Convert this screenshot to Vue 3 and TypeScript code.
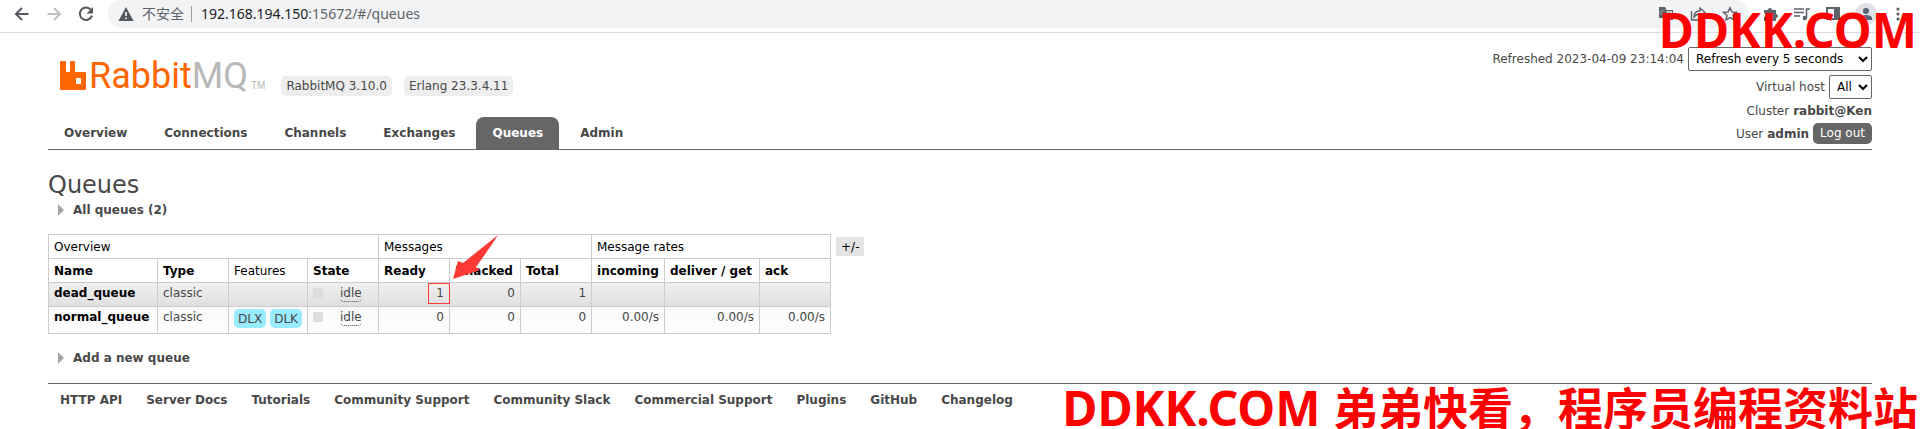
<script setup lang="ts">
import { ref } from 'vue'

interface Queue {
  name: string
  type: string
  features: string[]
  state: string
  ready: number
  unacked: number
  total: number
  rates: string[]
  marked: boolean
}

const tabs: string[] = ['Overview', 'Connections', 'Channels', 'Exchanges', 'Queues', 'Admin']
const current = 'Queues'

const queues: Queue[] = [
  { name: 'dead_queue', type: 'classic', features: [], state: 'idle', ready: 1, unacked: 0, total: 1, rates: ['', '', ''], marked: true },
  { name: 'normal_queue', type: 'classic', features: ['DLX', 'DLK'], state: 'idle', ready: 0, unacked: 0, total: 0, rates: ['0.00/s', '0.00/s', '0.00/s'], marked: false },
]

const links: string[] = ['HTTP API', 'Server Docs', 'Tutorials', 'Community Support', 'Community Slack', 'Commercial Support', 'Plugins', 'GitHub', 'Changelog']

const refresh = ref('Refresh every 5 seconds')
const vhost = ref('All')
</script>

<template>
  <div class="page">
    <div class="toolbar">
      <div class="nav-buttons">
        <button type="button" aria-label="Back">
          <svg width="16" height="16" viewBox="0 0 16 16"><path d="M14.5 8H2.2M8 2L2 8l6 6" fill="none" stroke="#55585c" stroke-width="2" /></svg>
        </button>
        <button type="button" aria-label="Forward">
          <svg width="16" height="16" viewBox="0 0 16 16"><path d="M1.5 8h12.3M8 2l6 6-6 6" fill="none" stroke="#bcbec1" stroke-width="2" /></svg>
        </button>
        <button type="button" aria-label="Reload">
          <svg width="16" height="16" viewBox="0 0 16 16"><path d="M13.2 4.2A6.2 6.2 0 1 0 14 9.6" fill="none" stroke="#55585c" stroke-width="2" /><path d="M15 1v6.5H8.5z" fill="#55585c" /></svg>
        </button>
      </div>
      <div class="address">
        <svg width="16" height="14" viewBox="0 0 16 14"><path d="M8 0l7.6 14H.4z" fill="#55585c" /><path d="M8 5v4M8 10.500v1.500" stroke="#fff" stroke-width="1.6" /></svg>
        <span class="insecure">不安全</span>
        <span class="bar"></span>
        <span class="url"><b>192.168.194.150</b>:15672/#/queues</span>
        <div class="address-icons">
          <svg width="16" height="16" viewBox="0 0 16 16"><path d="M1 1h6l1.5 3H15v10H7l-1-2H1z" fill="#5f6368" /><path d="M8.5 5.200H14V13H9.500z" fill="#f1f3f4" /><path d="M6 5.500A2 2 0 1 0 6 7.500H4.500M9 7h4.500M11 6v1c0 2-1 3-2 4M10 8l3 3" fill="none" stroke="#9a9da1" /></svg>
          <svg width="16" height="16" viewBox="0 0 16 16"><path d="M1.500 5v9h12v-3M4 11c0-4 2-6 6-6V2l5 4.500-5 4V8C7 8 5.500 9 4 11z" fill="none" stroke="#5f6368" stroke-width="1.4" /></svg>
          <svg width="16" height="16" viewBox="0 0 16 16"><path d="M8 1.800l1.900 4.100 4.500.5-3.400 3 1 4.400-4-2.300-4 2.300 1-4.400-3.400-3 4.500-.5z" fill="none" stroke="#5f6368" stroke-width="1.5" /></svg>
        </div>
      </div>
      <div class="tool-icons">
        <svg width="16" height="16" viewBox="0 0 16 16"><path d="M1 4h4a2 2 0 1 1 4 0h4v4a2 2 0 1 1 0 4v3H9.500a2 2 0 0 0-4 0H1v-4a2 2 0 0 0 0-4z" fill="#5f6368" /></svg>
        <svg width="18" height="16" viewBox="0 0 18 16"><path d="M1 3h10M1 6.500h10M1 10h6M13.500 12V3h3.500" fill="none" stroke="#5f6368" stroke-width="1.6" /><circle cx="11.8" cy="12" r="2.2" fill="#5f6368" /></svg>
        <svg width="16" height="16" viewBox="0 0 16 16"><path d="M1 1h14v13H1zM3 3v9h6V3z" fill="#5f6368" fill-rule="evenodd" /></svg>
        <svg width="22" height="22" viewBox="0 0 22 22"><circle cx="11" cy="11" r="11" fill="#dfe1e6" /><circle cx="11" cy="8" r="3" fill="#5b6678" /><path d="M5 17v-2c0-2 3-3 6-3s6 1 6 3v2z" fill="#5b6678" /></svg>
        <svg class="dots" width="4" height="16" viewBox="0 0 4 16"><circle cx="2" cy="3" r="1.6" fill="#5f6368" /><circle cx="2" cy="8" r="1.6" fill="#5f6368" /><circle cx="2" cy="13" r="1.6" fill="#5f6368" /></svg>
      </div>
    </div>

    <div class="content">
      <header>
        <div class="brand-side">
          <div class="brand">
            <svg width="26" height="29" viewBox="0 0 26 29"><path d="M1 0h4q1 0 1 1v9q0 1 1 1h2q1 0 1-1V1q0-1 1-1h3q1 0 1 1v9q0 1 1 1h9q1 0 1 1v16q0 1-1 1H1q-1 0-1-1V1q0-1 1-1zM17 17q-1 0-1 1v4q0 1 1 1h3q1 0 1-1v-4q0-1-1-1z" fill="#f60" fill-rule="evenodd" /></svg>
            <span class="wordmark">Rabbit<span>MQ</span></span>
            <span class="tm">TM</span>
            <span class="badge">RabbitMQ 3.10.0</span>
            <span class="badge">Erlang 23.3.4.11</span>
          </div>
          <nav class="tabs">
            <a v-for="t in tabs" :key="t" href="#" :class="{ selected: t === current }">{{ t }}</a>
          </nav>
        </div>
        <div class="login">
          <div class="row">
            <label for="refresh">Refreshed 2023-04-09 23:14:04</label>
            <select id="refresh" v-model="refresh" class="refresh"><option>Refresh every 5 seconds</option></select>
          </div>
          <div class="row">
            <label for="vhost">Virtual host</label>
            <select id="vhost" v-model="vhost"><option>All</option></select>
          </div>
          <div class="row">Cluster <b>rabbit@Ken</b></div>
          <div class="row">User <b>admin</b> <button type="button" class="logout">Log out</button></div>
        </div>
      </header>

      <main>
        <h1>Queues</h1>
        <h2>All queues (2)</h2>
        <div class="listing">
          <table>
            <colgroup>
              <col class="c-name"><col class="c-type"><col class="c-feat"><col class="c-std"><col class="c-std"><col class="c-std"><col class="c-std"><col class="c-in"><col class="c-get"><col class="c-std">
            </colgroup>
            <thead>
              <tr class="groups">
                <th colspan="4">Overview</th>
                <th colspan="3">Messages</th>
                <th colspan="3">Message rates</th>
              </tr>
              <tr>
                <th>Name</th><th>Type</th><th class="plain">Features</th><th>State</th>
                <th>Ready</th><th>Unacked</th><th>Total</th>
                <th>incoming</th><th>deliver / get</th><th>ack</th>
              </tr>
            </thead>
            <tbody>
              <tr v-for="q in queues" :key="q.name">
                <td><a href="#">{{ q.name }}</a></td>
                <td>{{ q.type }}</td>
                <td><span v-if="q.features.length" class="chips"><span v-for="f in q.features" :key="f">{{ f }}</span></span></td>
                <td><span class="state"><i></i><abbr>{{ q.state }}</abbr></span></td>
                <td class="num ready">
                  {{ q.ready }}
                  <template v-if="q.marked">
                    <span class="mark"></span>
                    <svg class="arrow" width="48" height="46" viewBox="0 0 48 46"><path d="M0 45L5 27l5 2L45 1Q34 18 23 33l4 3z" fill="#ff3a36" /></svg>
                  </template>
                </td>
                <td class="num">{{ q.unacked }}</td>
                <td class="num">{{ q.total }}</td>
                <td v-for="(r, i) in q.rates" :key="i" class="num">{{ r }}</td>
              </tr>
            </tbody>
          </table>
          <button type="button" class="columns">+/-</button>
        </div>
        <h2>Add a new queue</h2>
      </main>

      <footer>
        <a v-for="l in links" :key="l" href="#">{{ l }}</a>
      </footer>
    </div>

    <div class="stamp top">DDKK.COM</div>
    <div class="stamp bottom">DDKK.COM <span>弟弟快看，程序员编程资料站</span></div>
  </div>
</template>

<style>
body {
  background: #fff;
}
</style>

<style scoped>
.page {
  position: relative;
  min-height: 100vh;
  overflow: hidden;
  background: #fff;
  color: #484848;
  font: 12px/16px Verdana, "DejaVu Sans", sans-serif;
}
a {
  color: inherit;
  text-decoration: none;
}
button {
  font: inherit;
  border: 0;
  padding: 0;
}
svg {
  display: block;
  flex: none;
}

.toolbar {
  display: flex;
  align-items: flex-start;
  height: 32px;
  border-bottom: 1px solid #dadce0;
}
.nav-buttons {
  display: flex;
  gap: 16px;
  padding: 6px 14px;
}
.nav-buttons button {
  background: none;
}
.address {
  flex: 1;
  display: flex;
  align-items: center;
  height: 28px;
  padding: 0 10px;
  border-radius: 14px;
  background: #f1f3f4;
  font: 14px/20px "Noto Sans", "Noto Sans CJK SC", sans-serif;
  color: #5f6368;
}
.insecure {
  margin-left: 8px;
}
.bar {
  width: 1px;
  height: 16px;
  margin: 0 9px 0 7px;
  background: #9a9da1;
}
.url b {
  font-weight: 400;
  color: #202124;
}
.address-icons {
  display: flex;
  gap: 16px;
  margin-left: auto;
}
.tool-icons {
  display: flex;
  align-items: center;
  gap: 14px;
  height: 28px;
  padding: 0 20px 0 15px;
}
.dots {
  margin-left: 5px;
}

.content {
  padding: 0 48px;
}
header {
  display: flex;
  justify-content: space-between;
  align-items: flex-end;
  border-bottom: 1px solid #666;
}
.brand {
  display: flex;
  align-items: flex-end;
  padding: 0 12px 27px;
}
.wordmark {
  margin-left: 3px;
  font: 36px/28px Roboto, sans-serif;
  height: 28px;
  color: #f60;
}
.wordmark span {
  color: #b8b8b8;
}
.tm {
  margin-left: 3px;
  font: 10px/8px "Liberation Sans", Arial, sans-serif;
  color: #b8b8b8;
}
.badge {
  margin: 0 12px -6px 0;
  padding: 2px 5px;
  border-radius: 5px;
  background: #eee;
}
.tm + .badge {
  margin-left: 16px;
}
.tabs {
  display: flex;
  gap: 5px;
}
.tabs a {
  padding: 8px 16px;
  border-radius: 8px 8px 0 0;
  font-weight: 700;
}
.tabs a.selected {
  background: #666;
  color: #fff;
}
.login {
  display: flex;
  flex-direction: column;
  align-items: flex-end;
  gap: 4px;
  padding: 14px 0 5px;
}
.row {
  display: flex;
  align-items: center;
  gap: 4px;
}
select {
  height: 24px;
  padding: 0 3px;
  border: 1px solid #666;
  border-radius: 2px;
  background: #fff;
  color: #000;
  font: inherit;
}
.refresh {
  min-width: 184px;
}
.logout {
  padding: 2px 7px 3px;
  border-radius: 5px;
  background: #666;
  color: #fff;
}

h1 {
  margin: 0;
  padding: 20px 0 2px;
  font: 24px/30px Verdana, "DejaVu Sans", sans-serif;
}
h2 {
  display: flex;
  align-items: center;
  gap: 9px;
  margin: 0;
  padding-left: 10px;
  font: 700 12px/16px Verdana, "DejaVu Sans", sans-serif;
}
h2::before {
  content: "";
  border-left: 6px solid #a5a5a5;
  border-top: 6px solid transparent;
  border-bottom: 6px solid transparent;
}
.listing {
  display: flex;
  align-items: flex-start;
  gap: 5px;
  margin: 16px 0;
}
table {
  width: 783px;
  table-layout: fixed;
  border-collapse: collapse;
}
.c-name { width: 109px; }
.c-type { width: 71px; }
.c-feat { width: 79px; }
.c-std { width: 71px; }
.c-in { width: 73px; }
.c-get { width: 95px; }
th,
td {
  border: 1px solid #ccc;
  white-space: nowrap;
}
th {
  padding: 4px 5px 3px;
  text-align: left;
  color: #000;
}
.groups th,
.plain {
  font-weight: 400;
}
td {
  padding: 2px 5px 5px;
  vertical-align: top;
}
tbody tr {
  background: linear-gradient(#f8f8f8, #fff);
}
tbody tr:nth-child(odd) {
  background: linear-gradient(#f0f0f0, #dfdfdf);
}
td a {
  font-weight: 700;
  color: #000;
}
.num {
  text-align: right;
}
.chips {
  display: flex;
  gap: 4px;
}
.chips span {
  padding: 2px 4px 1px;
  border-radius: 5px;
  background: #99ebff;
}
.state {
  display: flex;
  align-items: center;
  height: 16px;
}
.state i {
  width: 10px;
  height: 10px;
  margin-right: 17px;
  background: #ddd;
}
.state abbr {
  border-bottom: 1px dotted #555;
  border-radius: 4px;
}
.ready {
  position: relative;
}
.mark {
  position: absolute;
  top: 0;
  right: -1px;
  box-sizing: border-box;
  width: 22px;
  height: 21px;
  border: 1px solid #ff3a36;
}
.arrow {
  position: absolute;
  z-index: 1;
  right: -52px;
  bottom: 26px;
}
.columns {
  margin-top: 3px;
  padding: 2px 5px 1px;
  background: #e4e4e4;
  color: #000;
}
footer {
  display: flex;
  gap: 24px;
  margin-top: 17px;
  padding: 8px 12px;
  border-top: 1px solid #666;
  font-weight: 700;
}

.stamp {
  position: absolute;
  z-index: 2;
  white-space: nowrap;
  color: #f00;
  font: 700 48px/48px "Noto Sans", "Open Sans", sans-serif;
}
.stamp.top {
  top: 6px;
  right: 3px;
}
.stamp.bottom {
  right: 2px;
  bottom: -3px;
}
.stamp span {
  font: 700 45px/48px "Noto Sans CJK SC", sans-serif;
}
</style>
